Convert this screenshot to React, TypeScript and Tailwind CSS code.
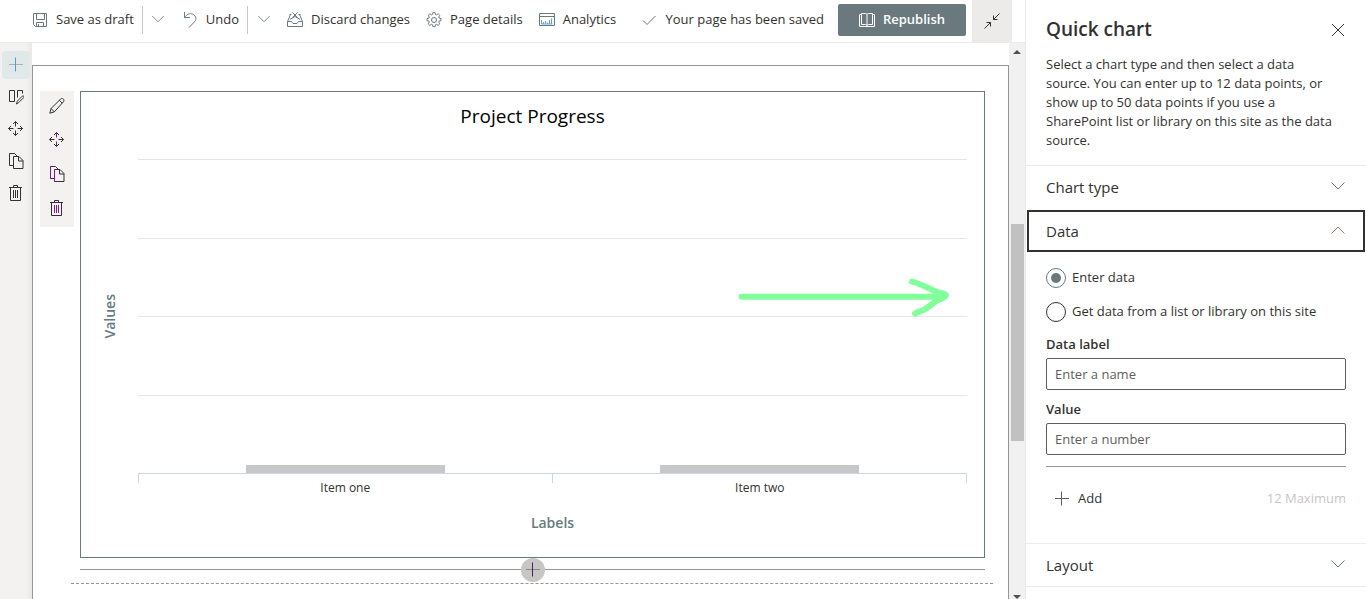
import { useState } from "react";
import type { ReactNode } from "react";

function Icon({ children, className = "" }: { children: ReactNode; className?: string }) {
  return (
    <svg
      viewBox="0 0 16 16"
      className={`size-4 shrink-0 ${className}`}
      fill="none"
      stroke="currentColor"
      strokeWidth="1"
      aria-hidden="true"
    >
      {children}
    </svg>
  );
}

const SaveIcon = () => (
  <Icon className="text-[#69797e]">
    <path d="M1.5 1.5h13v13H3.5l-2-2zM4.5 1.5v6h8v-6M4.5 14.5v-4h7v4M6.5 12v2.5" />
  </Icon>
);

const UndoIcon = () => (
  <Icon className="text-[#69797e]">
    <path d="M2.5 0v5.500h5.500M2.500 5.500C4.500 2.500 7.500 1 10.500 2c3.400 1.200 4.400 5 2 7.800L7 15.500" />
  </Icon>
);

const DiscardIcon = () => (
  <Icon className="text-[#69797e]">
    <path d="M3.500 2.500L.5 9.500v5h15v-5l-3-7M.5 9.500h4l1.500 2h4l1.500-2h4M5.500.5l5 5M10.500.5l-5 5M2.800 7.500L8 4.500l5.200 3M2.500 2.500h2M11.500 2.500h2" />
  </Icon>
);

const GearIcon = () => (
  <Icon className="text-[#69797e]">
    <circle cx="8" cy="8" r="2.5" />
    <path d="M6.900.6h2.200l.4 1.900 1 .4 1.700-1.100 1.600 1.600-1.100 1.700.4 1 1.900.4v2.200l-1.900.4-.4 1 1.100 1.700-1.600 1.600-1.700-1.100-1 .4-.4 1.900H6.900l-.4-1.900-1-.4-1.700 1.100-1.600-1.600 1.100-1.700-.4-1L1 8.700V6.500l1.900-.4.4-1-1.100-1.700 1.600-1.600 1.700 1.100 1-.4z" />
  </Icon>
);

const AnalyticsIcon = () => (
  <Icon className="text-[#69797e]">
    <path d="M.5 1.500h15v12H.5zM.5 4.500h15" />
    <path className="stroke-[#5aa7d6]" d="M2.500 8v4M4.500 10v2M6.500 9v3M8.500 10.500v1.500M10.500 8v4M12.500 6.500v5.500M2.500 12h11" />
  </Icon>
);

const CheckIcon = () => (
  <Icon className="text-[#69797e]">
    <path d="M2 8.500l4 4 8.500-8.500" />
  </Icon>
);

const BookIcon = () => (
  <Icon>
    <path d="M2.500 1.500h3.500c1.200 0 2 .5 2 1 0-.5.8-1 2-1h3.500v11h-3.500c-1.200 0-2 .5-2 1 0-.5-.8-1-2-1H2.500zM8 2.500v11M2.500 2.500h-2v12h15v-12h-2" />
  </Icon>
);

const CollapseIcon = () => (
  <Icon>
    <path d="M15.500.5l-6 6M9.500 2.500v4h4M.5 15.500l6-6M2.500 9.500h4v4" />
  </Icon>
);

const ChevronIcon = ({ up = false, className = "" }: { up?: boolean; className?: string }) => (
  <Icon className={className}>
    <path d={up ? "M1.500 10.500L8 4l6.500 6.500" : "M1.500 3.500L8 10l6.500-6.500"} />
  </Icon>
);

const PlusIcon = ({ className = "", upright = "" }: { className?: string; upright?: string }) => (
  <Icon className={className}>
    <path d="M1 7.500h14" />
    <path className={upright} d="M7.500.5v14" />
  </Icon>
);

const SectionEditIcon = () => (
  <Icon>
    <path d="M6.500 1.500h-5v11h5zM9.500 8.500v-7h5v3M8.500 15l.8-2.800 5-5c.5-.5 1.200-.4 1.500 0 .4.4.3 1-.1 1.400l-5 5z" />
  </Icon>
);

const PencilIcon = () => (
  <Icon>
    <path d="M.8 15.200l1.300-4.700L11.600 1c.7-.7 1.900-.7 2.700 0 .8.8.8 2 .1 2.800L5.300 13.900zM2.100 10.500l3.200 3.400M10.300 2.300l2.900 2.900" />
  </Icon>
);

const MoveIcon = ({ accent = false }: { accent?: boolean }) => (
  <Icon>
    <path d="M.5 7.500h5M9.500 7.500h5M3 5L.5 7.500 3 10M12 5l2.500 2.500L12 10M5 3L7.500.5 10 3M5 12l2.500 2.500L10 12" />
    <path className={accent ? "stroke-[#881798]" : ""} d="M7.500.5v5M7.500 9.500v5" />
  </Icon>
);

const CopyIcon = ({ accent = false }: { accent?: boolean }) => (
  <Icon>
    <path d="M5.500 12.500h-4v-12h5l3 3M5.500 3.500h5.500l4 4v8H5.500zM10.500 3.500v4.500h4.500" />
    {accent && <path className="stroke-[#881798]" d="M1.500.5v12M5.500 3.500v12" />}
  </Icon>
);

const TrashIcon = ({ accent = false }: { accent?: boolean }) => (
  <Icon>
    <path d="M1 2.500h13M5.500 2.500v-2h4v2M2.500 2.500v13h10v-13" />
    <path className={accent ? "stroke-[#881798]" : ""} d="M5.500 5v8M7.500 5v8M9.500 5v8" />
  </Icon>
);

function Command({ icon, label }: { icon: ReactNode; label: string }) {
  return (
    <button type="button" className="flex h-10 items-center gap-2 px-2 whitespace-nowrap">
      {icon}
      {label}
    </button>
  );
}

function SplitChevron({ label }: { label: string }) {
  return (
    <button
      type="button"
      aria-label={label}
      className="flex h-7 w-8 items-center justify-center border-l border-[#c8c6c4] text-[#69797e]"
    >
      <ChevronIcon className="size-[14px]" />
    </button>
  );
}

function CommandBar() {
  return (
    <header className="flex h-[43px] shrink-0 items-start border-b border-[#edebe9] pr-[13px] pl-6 text-[13px]">
      <nav className="flex flex-1 items-center">
        <Command icon={<SaveIcon />} label="Save as draft" />
        <SplitChevron label="More save options" />
        <Command icon={<UndoIcon />} label="Undo" />
        <SplitChevron label="More undo options" />
        <Command icon={<DiscardIcon />} label="Discard changes" />
        <Command icon={<GearIcon />} label="Page details" />
        <Command icon={<AnalyticsIcon />} label="Analytics" />
      </nav>
      <div className="flex h-10 items-center gap-2 pr-[14px] whitespace-nowrap" role="status">
        <CheckIcon />
        Your page has been saved
      </div>
      <button
        type="button"
        className="mt-1 mr-[6px] flex h-8 w-32 items-center justify-center gap-2 rounded-xs bg-[#69797e] font-semibold text-white"
      >
        <BookIcon />
        Republish
      </button>
      <button
        type="button"
        aria-label="Collapse"
        className="flex h-[42px] w-10 items-center justify-center bg-[#edebe9] text-[#323130]"
      >
        <CollapseIcon />
      </button>
    </header>
  );
}

function ToolButton({ label, className, children }: { label: string; className: string; children: ReactNode }) {
  return (
    <button type="button" aria-label={label} className={`flex items-center justify-center ${className}`}>
      {children}
    </button>
  );
}

function SectionRail() {
  return (
    <div className="flex w-8 shrink-0 flex-col gap-1 bg-gradient-to-r from-[#f3f2f1] from-80% to-[#e9e8e7] pt-2 pl-[2px]">
      <ToolButton label="Add section" className="size-7 rounded-sm bg-[#e1e8e9]">
        <PlusIcon className="text-[#a9b3b5]" upright="stroke-[#4f9fc9]" />
      </ToolButton>
      <ToolButton label="Edit section" className="size-7">
        <SectionEditIcon />
      </ToolButton>
      <ToolButton label="Move section" className="size-7">
        <MoveIcon />
      </ToolButton>
      <ToolButton label="Duplicate section" className="size-7">
        <CopyIcon />
      </ToolButton>
      <ToolButton label="Delete section" className="size-7">
        <TrashIcon />
      </ToolButton>
    </div>
  );
}

function WebPartTools() {
  return (
    <div className="flex w-[34px] shrink-0 flex-col gap-1 self-start bg-[#f3f2f1] pb-1">
      <ToolButton label="Edit web part" className="h-[30px]">
        <PencilIcon />
      </ToolButton>
      <ToolButton label="Move web part" className="h-[30px]">
        <MoveIcon accent />
      </ToolButton>
      <ToolButton label="Duplicate web part" className="h-[30px]">
        <CopyIcon accent />
      </ToolButton>
      <ToolButton label="Delete web part" className="h-[30px]">
        <TrashIcon accent />
      </ToolButton>
    </div>
  );
}

const items = ["Item one", "Item two"];

function Chart() {
  return (
    <figure className="relative border border-[#69797e] pt-2 pr-[17px] pb-6">
      <figcaption className="pl-[17px] text-center text-[19px] leading-8 text-black">Project Progress</figcaption>
      <div className="mt-[27px] flex">
        <div className="flex h-[314px] w-[57px] shrink-0 items-center justify-center">
          <span className="rotate-180 text-sm font-semibold text-[#69797e] [writing-mode:vertical-rl]">Values</span>
        </div>
        <div className="flex-1">
          <div className="flex h-[314px] flex-col">
            <div className="flex-1 border-t border-[#e6e6e6]" />
            <div className="flex-1 border-t border-[#e6e6e6]" />
            <div className="flex-1 border-t border-[#e6e6e6]" />
            <div className="grid flex-1 grid-cols-2 items-end justify-items-center border-t border-[#e6e6e6]">
              {items.map((item) => (
                <div key={item} className="h-2 w-[48%] bg-[#c8c8c8]" />
              ))}
            </div>
          </div>
          <div className="grid h-[10px] grid-cols-2 border-t border-r border-[#ccd6eb]">
            {items.map((item) => (
              <div key={item} className="border-l border-[#ccd6eb]" />
            ))}
          </div>
          <div className="-mt-1 grid grid-cols-2 text-center text-xs leading-[18px] font-medium">
            {items.map((item) => (
              <span key={item}>{item}</span>
            ))}
          </div>
          <div className="mt-4 text-center text-sm font-semibold text-[#69797e]">Labels</div>
        </div>
      </div>
      <svg
        viewBox="737 277 214 42"
        className="absolute top-[185px] right-[33px] h-[42px] w-[214px]"
        fill="none"
        stroke="#80ff9b"
        strokeWidth="6"
        strokeLinecap="round"
        strokeLinejoin="round"
        aria-hidden="true"
      >
        <path d="M741.500 296.700H942M912 281.700c8 2 16 6 24 10 4 2 9 1 10 3.500-2 4-6 3-10 6-5 4-9 7-12 8.500-3 1.300-6 2-9 4" />
      </svg>
    </figure>
  );
}

function Canvas() {
  return (
    <main className="flex min-w-0 flex-1 flex-col pt-[22px]">
      <section className="flex flex-1 gap-[6px] border border-b-0 border-[#979593] pt-[25px] pl-[7px]">
        <WebPartTools />
        <div className="min-w-0 flex-1">
          <div className="pr-[23px]">
            <Chart />
            <div className="relative mt-[11px] flex justify-center border-t border-[#979593]">
              <button
                type="button"
                aria-label="Add a new web part"
                className="absolute -top-3 flex size-6 items-center justify-center rounded-full bg-[#c8c6c4]"
              >
                <PlusIcon className="text-[#8a8886]" upright="stroke-[#4b1a6b]" />
              </button>
            </div>
          </div>
          <div className="mt-[13px] mr-[15px] -ml-[9px] border-t border-dashed border-[#979593]" />
        </div>
      </section>
    </main>
  );
}

function Scrollbar() {
  return (
    <div className="flex w-4 shrink-0 flex-col items-center bg-[#f1f1f1] pt-[7px]" aria-hidden="true">
      <div className="border-x-4 border-b-4 border-x-transparent border-b-[#505050]" />
      <div className="mt-[170px] h-[217px] w-[13px] bg-[#c1c1c1]" />
      <div className="mt-auto border-x-4 border-t-4 border-x-transparent border-t-[#505050]" />
    </div>
  );
}

function GroupHeader({ label, open = false }: { label: string; open?: boolean }) {
  return (
    <h3>
      <button
        type="button"
        aria-expanded={open}
        className={`flex h-[42px] w-full items-center justify-between text-[15px] ${
          open ? "border-2 border-[#323130] px-[17px]" : "px-5"
        }`}
      >
        {label}
        <ChevronIcon up={open} className={open ? "text-[#a08060]" : "text-[#69797e]"} />
      </button>
    </h3>
  );
}

function RadioOption({ label, checked, onChange }: { label: string; checked: boolean; onChange: () => void }) {
  return (
    <label className="flex h-5 items-center gap-[6px]">
      <input
        type="radio"
        name="source"
        checked={checked}
        onChange={onChange}
        className="size-5 shrink-0 appearance-none rounded-full border border-[#323130] checked:border-[#69797e] checked:bg-[#69797e] checked:bg-clip-content checked:p-1"
      />
      {label}
    </label>
  );
}

function Field({ id, label, placeholder }: { id: string; label: string; placeholder: string }) {
  return (
    <div>
      <label htmlFor={id} className="block h-[23px] leading-[18px] font-semibold">
        {label}
      </label>
      <input
        id={id}
        type="text"
        placeholder={placeholder}
        className="block h-8 w-full rounded-xs border border-[#605e5c] px-2 placeholder:text-[#605e5c]"
      />
    </div>
  );
}

function PropertyPane() {
  const [source, setSource] = useState("enter");

  return (
    <aside className="w-[341px] shrink-0 border-l border-[#edebe9] text-[13px]">
      <div className="px-5 pt-[15px] pb-[15px]">
        <div className="flex h-10 items-start justify-between">
          <h2 className="text-[19px] leading-7 font-semibold">Quick chart</h2>
          <button type="button" aria-label="Close" className="flex h-[30px] items-center">
            <Icon>
              <path d="M2 2l12 12M14 2L2 14" />
            </Icon>
          </button>
        </div>
        <p className="pr-2 leading-[19px]">
          Select a chart type and then select a data source. You can enter up to 12 data points, or show up to 50 data
          points if you use a SharePoint list or library on this site as the data source.
        </p>
      </div>
      <div className="border-t border-[#edebe9] pb-[2px]">
        <GroupHeader label="Chart type" />
      </div>
      <div className="px-px">
        <GroupHeader label="Data" open />
      </div>
      <div className="px-5 pt-4 pb-6">
        <div className="flex flex-col gap-[14px]">
          <RadioOption label="Enter data" checked={source === "enter"} onChange={() => setSource("enter")} />
          <RadioOption
            label="Get data from a list or library on this site"
            checked={source === "list"}
            onChange={() => setSource("list")}
          />
        </div>
        <div className="mt-[13px] flex flex-col gap-[10px]">
          <Field id="data-label" label="Data label" placeholder="Enter a name" />
          <Field id="value" label="Value" placeholder="Enter a number" />
        </div>
        <hr className="mt-[11px] border-[#979593]" />
        <div className="mt-3 flex h-10 items-center justify-between">
          <button type="button" className="flex items-center gap-2 pl-2">
            <PlusIcon className="text-[#605e5c]" />
            Add
          </button>
          <span className="text-[#c8c6c4]">12 Maximum</span>
        </div>
      </div>
      <div className="border-y border-[#edebe9]">
        <GroupHeader label="Layout" />
      </div>
    </aside>
  );
}

export default function App() {
  return (
    <div className="flex h-screen overflow-hidden bg-white font-['Open_Sans','Noto_Sans',sans-serif] text-[#323130]">
      <div className="flex min-w-0 flex-1 flex-col">
        <CommandBar />
        <div className="flex min-h-0 flex-1">
          <SectionRail />
          <Canvas />
          <Scrollbar />
        </div>
      </div>
      <PropertyPane />
    </div>
  );
}
